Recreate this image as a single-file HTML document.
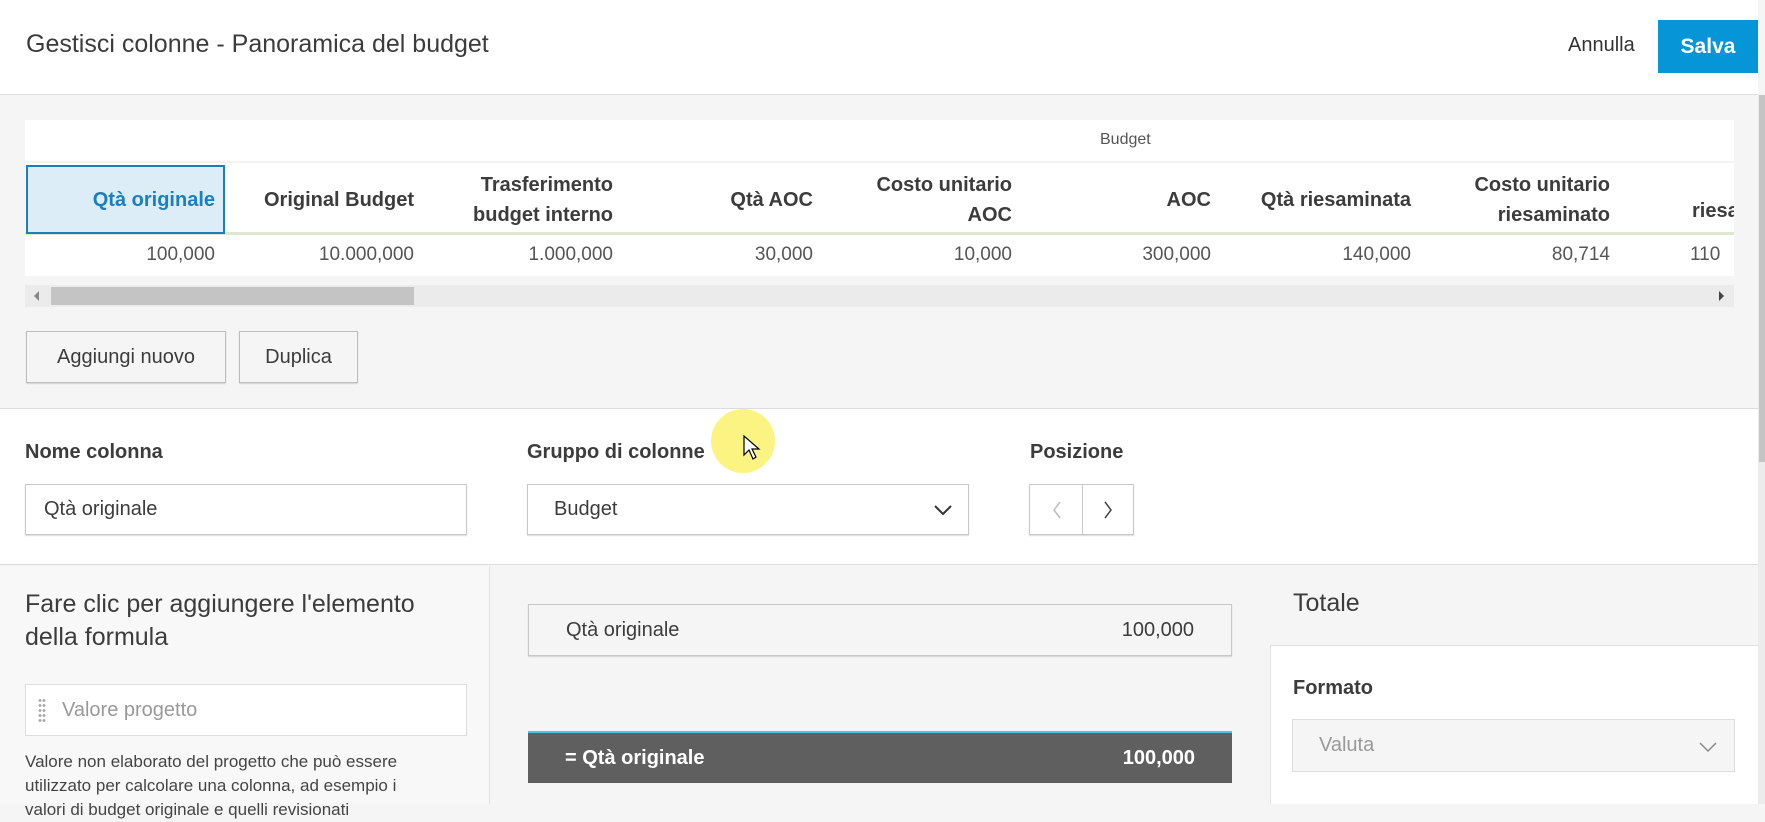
<!DOCTYPE html>
<html><head><meta charset="utf-8"><style>
*{box-sizing:border-box;margin:0;padding:0}
body{width:1765px;height:804px;overflow:hidden;background:#f5f5f5;font-family:"Liberation Sans Narrow","Liberation Sans",sans-serif;color:#3c3c3c;position:relative}
.a{position:absolute}
.hdr{left:0;top:0;width:1758px;height:95px;background:#fff;border-bottom:1px solid #dcdcdc}
.t{font-size:25px}
.inp{background:#fff;border:1px solid #c8c8c8;box-shadow:0 1px 1px rgba(0,0,0,.15);font-size:20px;padding-left:18px;display:flex;align-items:center}
.btn{background:#f5f5f5;border:1px solid #bdbdbd;box-shadow:0 1px 1px rgba(0,0,0,.15);font-size:20px;display:flex;align-items:center;justify-content:center;color:#3c3c3c}
.col{position:absolute;top:165px;height:69px;width:199px;text-align:right;padding-right:10px;font-size:20px;font-weight:bold;display:flex;align-items:center;justify-content:flex-end;line-height:30px;color:#3c3c3c}
.val{position:absolute;top:234px;height:42px;width:199px;text-align:right;padding-right:10px;font-size:19px;line-height:42px;color:#555}
.lbl{font-size:20px;font-weight:bold}
</style></head><body>
<div class="a hdr"></div>
<div class="a t" style="left:26px;top:30px">Gestisci colonne - Panoramica del budget</div>
<div class="a" style="left:1568px;top:34px;font-size:20px;color:#333">Annulla</div>
<div class="a" style="left:1658px;top:20px;width:100px;height:53px;background:#0696d7;color:#fff;font-size:21px;font-weight:bold;display:flex;align-items:center;justify-content:center">Salva</div>
<div class="a" style="left:1758px;top:95px;width:7px;height:709px;background:#ececec"></div>
<div class="a" style="left:1759px;top:95px;width:6px;height:367px;background:#c4c4c4"></div>

<div class="a" style="left:25px;top:120px;width:1709px;height:156px;background:#fff;overflow:hidden">
<div class="a" style="left:0;top:0;width:1709px;height:43px;border-bottom:2px solid #f3f3f3"></div>
<div class="a" style="left:1075px;top:11px;font-size:16px;color:#555">Budget</div>
<div class="a" style="left:0;top:112px;width:1709px;height:3px;background:#dfe8cf"></div>
</div>
<div class="a" style="left:26px;top:165px;width:199px;height:69px;background:#dcedf8;border:2px solid #1a7fc1"></div>
<div class="col" style="left:26px;color:#1a7fc1">Qtà originale</div>
<div class="col" style="left:225px">Original Budget</div>
<div class="col" style="left:424px">Trasferimento<br>budget interno</div>
<div class="col" style="left:624px">Qtà AOC</div>
<div class="col" style="left:823px">Costo unitario<br>AOC</div>
<div class="col" style="left:1022px">AOC</div>
<div class="col" style="left:1222px">Qtà riesaminata</div>
<div class="col" style="left:1421px">Costo unitario<br>riesaminato</div>
<div class="a" style="left:1692px;top:200px;font-size:20px;font-weight:bold;width:42px;overflow:hidden;white-space:nowrap">riesaminato</div>
<div class="val" style="left:26px">100,000</div>
<div class="val" style="left:225px">10.000,000</div>
<div class="val" style="left:424px">1.000,000</div>
<div class="val" style="left:624px">30,000</div>
<div class="val" style="left:823px">10,000</div>
<div class="val" style="left:1022px">300,000</div>
<div class="val" style="left:1222px">140,000</div>
<div class="val" style="left:1421px">80,714</div>
<div class="a" style="left:1690px;top:234px;font-size:19px;line-height:42px;color:#555;width:44px;overflow:hidden">110</div>

<div class="a" style="left:25px;top:285px;width:1709px;height:22px;background:#ebebeb"></div>
<div class="a" style="left:51px;top:287px;width:363px;height:18px;background:#c4c4c4"></div>
<div class="a" style="left:34px;top:291px;width:0;height:0;border:5px solid transparent;border-right:5px solid #888;border-left:0"></div>
<div class="a" style="left:1719px;top:291px;width:0;height:0;border:5px solid transparent;border-left:5px solid #444;border-right:0"></div>

<div class="a btn" style="left:26px;top:331px;width:200px;height:52px">Aggiungi nuovo</div>
<div class="a btn" style="left:239px;top:331px;width:119px;height:52px">Duplica</div>

<div class="a" style="left:0;top:408px;width:1758px;height:157px;background:#fff;border-top:1px solid #dcdcdc;border-bottom:1px solid #dcdcdc"></div>
<div class="a lbl" style="left:25px;top:441px">Nome colonna</div>
<div class="a lbl" style="left:527px;top:441px">Gruppo di colonne</div>
<div class="a lbl" style="left:1030px;top:441px">Posizione</div>
<div class="a inp" style="left:25px;top:484px;width:442px;height:51px">Qtà originale</div>
<div class="a inp" style="left:527px;top:484px;width:442px;height:51px;padding-left:26px">Budget</div>
<svg class="a" style="left:933px;top:503px" width="20" height="14"><path d="M2 3 L10 11 L18 3" fill="none" stroke="#333" stroke-width="2"/></svg>
<div class="a" style="left:1029px;top:484px;width:105px;height:51px;background:#fff;border:1px solid #c8c8c8;box-shadow:0 1px 1px rgba(0,0,0,.15)"></div>
<div class="a" style="left:1082px;top:484px;width:1px;height:51px;background:#c8c8c8"></div>
<svg class="a" style="left:1050px;top:500px" width="14" height="20"><path d="M10 2 L4 10 L10 18" fill="none" stroke="#bbb" stroke-width="1.5"/></svg>
<svg class="a" style="left:1101px;top:500px" width="14" height="20"><path d="M4 2 L10 10 L4 18" fill="none" stroke="#444" stroke-width="1.5"/></svg>
<div class="a" style="left:711px;top:409px;width:64px;height:64px;border-radius:50%;background:rgba(250,240,90,.75)"></div>
<svg class="a" style="left:743px;top:435px" width="18" height="26"><path d="M1 1 L1 20 L6 15 L10 24 L13 22 L9 14 L16 14 Z" fill="#fff" stroke="#000" stroke-width="1.2"/></svg>

<div class="a" style="left:0;top:566px;width:490px;height:238px;background:#f8f8f8;border-right:1px solid #e3e3e3"></div>
<div class="a" style="left:25px;top:588px;font-size:25px;line-height:33px">Fare clic per aggiungere l'elemento<br>della formula</div>
<div class="a inp" style="left:25px;top:684px;width:442px;height:52px;box-shadow:none;border-color:#ddd;color:#999;padding-left:36px">Valore progetto</div>
<div class="a" style="left:38px;top:698px;width:8px;height:24px;background-image:radial-gradient(circle,#aaa 1.3px,transparent 1.6px);background-size:4px 5px"></div>
<div class="a" style="left:25px;top:750px;font-size:17px;line-height:24px;color:#444">Valore non elaborato del progetto che può essere<br>utilizzato per calcolare una colonna, ad esempio i<br>valori di budget originale e quelli revisionati</div>

<div class="a inp" style="left:528px;top:604px;width:704px;height:52px;background:#f5f5f5;padding:0 37px;justify-content:space-between"><span>Qtà originale</span><span>100,000</span></div>
<div class="a" style="left:528px;top:731px;width:704px;height:52px;background:#5f5f5f;border-top:2px solid #4cc3e8;color:#fff;font-size:20px;font-weight:bold;padding:0 37px;display:flex;align-items:center;justify-content:space-between"><span>= Qtà originale</span><span>100,000</span></div>

<div class="a" style="left:1270px;top:566px;width:488px;height:238px;background:#fff;border-left:1px solid #e3e3e3"></div>
<div class="a" style="left:1270px;top:566px;width:488px;height:80px;background:#f5f5f5;border-bottom:1px solid #e0e0e0"></div>
<div class="a" style="left:1293px;top:589px;font-size:25px">Totale</div>
<div class="a lbl" style="left:1293px;top:677px">Formato</div>
<div class="a inp" style="left:1292px;top:719px;width:443px;height:53px;background:#f5f5f5;border-color:#ddd;box-shadow:none;color:#999;padding-left:26px">Valuta</div>
<svg class="a" style="left:1698px;top:740px" width="20" height="14"><path d="M2 3 L10 11 L18 3" fill="none" stroke="#888" stroke-width="1.5"/></svg>
</body></html>
